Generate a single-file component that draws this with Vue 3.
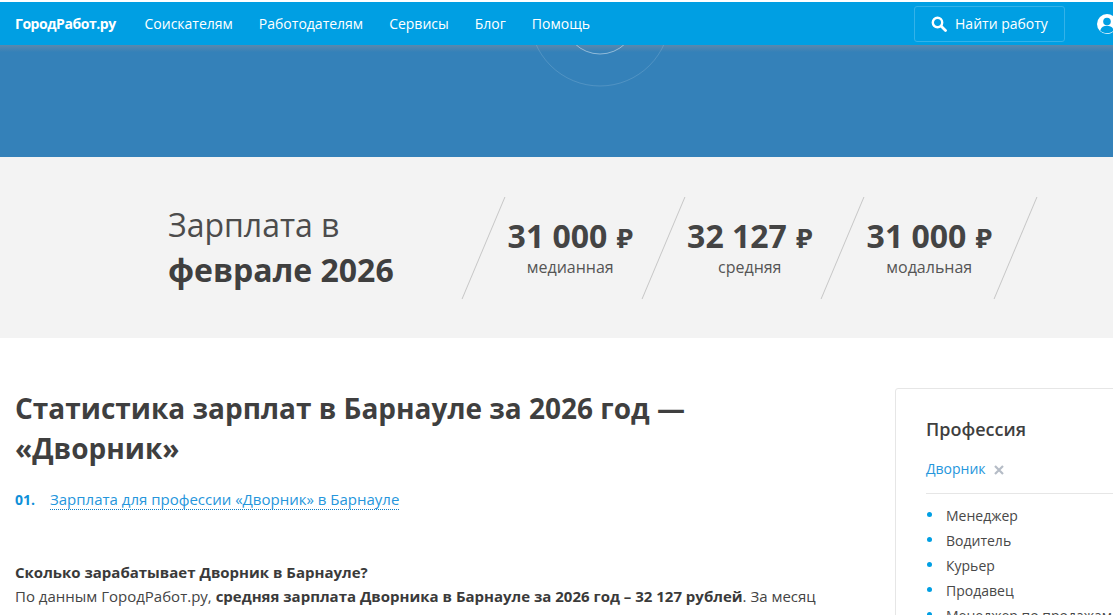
<script setup>
const nav = ['Соискателям', 'Работодателям', 'Сервисы', 'Блог', 'Помощь']
const stats = [
  { value: '31 000', label: 'медианная' },
  { value: '32 127', label: 'средняя' },
  { value: '31 000', label: 'модальная' }
]
const professions = ['Менеджер', 'Водитель', 'Курьер', 'Продавец', 'Менеджер по продажам']
</script>

<template>
  <div class="page">
    <header class="topbar">
      <a class="logo">ГородРабот.ру</a>
      <nav class="nav">
        <a v-for="item in nav" :key="item">{{ item }}</a>
      </nav>
      <button class="find">
        <svg width="16" height="16" viewBox="0 0 16 16" fill="none" stroke="#fff">
          <circle cx="6.500" cy="6.500" r="4.700" stroke-width="2.400" />
          <path d="M10 10l4.500 4.500" stroke-width="2.800" stroke-linecap="round" />
        </svg>
        <span>Найти работу</span>
      </button>
      <svg class="user" width="20" height="20" viewBox="0 0 20 20">
        <circle cx="10" cy="10" r="10" fill="#fff" />
        <circle cx="10" cy="7.500" r="3.800" fill="#009fe3" />
        <path d="M3.200 16.500c1-3.500 3.500-4.800 6.800-4.800s5.800 1.300 6.800 4.800C15 18.300 12.700 19.200 10 19.200S5 18.300 3.200 16.500z" fill="#009fe3" />
      </svg>
    </header>

    <section class="hero">
      <svg class="rings" width="160" height="60" viewBox="0 0 160 60" fill="none">
        <circle cx="80" cy="-29" r="70" stroke="#fff" stroke-opacity=".14" />
        <circle cx="80" cy="-27" r="36" stroke="#fff" stroke-opacity=".45" />
      </svg>
    </section>

    <section class="stats">
      <h2 class="stats-title">Зарплата в<br /><b>феврале 2026</b></h2>
      <div class="stats-list">
        <div v-for="(s, i) in stats" :key="i" class="stat">
          <div class="stat-value">{{ s.value }} <span class="rub">₽</span></div>
          <div class="stat-label">{{ s.label }}</div>
        </div>
      </div>
    </section>

    <div class="content">
      <main class="main">
        <h1>Статистика зарплат в Барнауле за 2026 год — «Дворник»</h1>
        <div class="toc">
          <span class="num">01.</span>
          <a>Зарплата для профессии «Дворник» в Барнауле</a>
        </div>
        <p class="text">
          <b>Сколько зарабатывает Дворник в Барнауле?</b><br />
          По данным ГородРабот.ру, <b>средняя зарплата Дворника в Барнауле за 2026 год – 32 127 рублей</b>. За месяц
          прибавка к зарплате составила 4,7% – с 30 690 до 32 127 рублей.
        </p>
      </main>
      <aside class="side">
        <h3>Профессия</h3>
        <div class="chosen">
          <a>Дворник</a>
          <svg class="x" width="10" height="10" viewBox="0 0 10 10" stroke="#b5bcc6" stroke-width="2.200">
            <path d="M1 1l8 8M9 1L1 9" />
          </svg>
        </div>
        <ul>
          <li v-for="p in professions" :key="p">{{ p }}</li>
        </ul>
      </aside>
    </div>
  </div>
</template>

<style>
html, body { margin: 0; height: 615px; overflow: hidden; background: #fff; }
</style>

<style scoped>
.page {
  width: 1113px;
  height: 615px;
  overflow: hidden;
  font-family: "Open Sans", "Noto Sans", sans-serif;
  color: #3f3f3f;
}
.topbar {
  margin-top: 2px;
  height: 43px;
  background: #009fe3;
  display: flex;
  align-items: center;
  padding-left: 15px;
  color: #fff;
  position: relative;
  z-index: 1;
  white-space: nowrap;
}
.logo { font-size: 14px; letter-spacing: -0.450px; font-weight: 700; width: 129.500px; flex: none; }
.nav { display: flex; gap: 26px; font-size: 14px; }
.find {
  margin-left: 324px;
  width: 151px;
  height: 36px;
  box-sizing: border-box;
  flex: none;
  border: 1px solid #33b2e9;
  border-radius: 3px;
  background: none;
  color: #fff;
  font: 14px "Open Sans", sans-serif;
  display: flex;
  align-items: center;
  justify-content: center;
  gap: 8px;
  padding: 0;
}
.user { margin-left: 32px; flex: none; }
.hero {
  height: 112px;
  position: relative;
  overflow: hidden;
  background: linear-gradient(#5a88ad 0, #3481b9 7px);
}
.rings { position: absolute; left: 520px; top: 0; }
.stats {
  height: 181px;
  background: #f3f3f3;
  display: flex;
  align-items: center;
  padding-left: 168px;
}
.stats-title {
  margin: 0;
  width: 315px;
  flex: none;
  font-size: 32px;
  line-height: 45px;
  font-weight: 400;
  color: #4c4c4c;
  position: relative;
  top: -1px;
}
.stats-title b { font-weight: 700; color: #3f3f3f; }
.stats-list { display: flex; }
.stat {
  width: 179.500px;
  height: 102px;
  flex: none;
  position: relative;
  display: flex;
  flex-direction: column;
  align-items: center;
  justify-content: center;
  padding-right: 5px;
  padding-bottom: 3px;
  box-sizing: border-box;
}
.stat::before,
.stat:last-child::after {
  content: "";
  position: absolute;
  top: 0;
  left: 0;
  height: 100%;
  border-left: 1px solid #c6c6c6;
  transform: skewX(-22.800deg);
}
.stat:last-child::after { left: auto; right: 5.500px; }
.stat-value { font-size: 32px; font-weight: 700; line-height: 40px; white-space: nowrap; color: #444; }
.rub { font-size: 27px; margin-left: 1px; }
.stat-label { font-size: 16px; line-height: 19px; color: #555; }
.content {
  display: flex;
  padding: 50px 0 0 15px;
}
.main { width: 830px; flex: none; margin-right: 50px; }
h1 {
  margin: 0;
  font-size: 28px;
  line-height: 40px;
  font-weight: 700;
  color: #3f3f3f;
}
.toc { margin-top: 22px; display: flex; font-size: 15px; line-height: 20px; }
.num { width: 35px; font-weight: 700; color: #0f8fd8; font-size: 14px; }
.toc a {
  color: #2596dc;
  border-bottom: 1px dotted #0f7cc0;
  line-height: 19px;
}
.text { margin: 50px 0 0; font-size: 15px; line-height: 24px; color: #444; }
.text b { color: #3a3a3a; }
.side {
  width: 300px;
  height: 400px;
  flex: none;
  box-sizing: border-box;
  border: 1px solid #e6e6e6;
  border-radius: 3px;
  padding: 28px 30px 30px;
  white-space: nowrap;
}
h3 { margin: 0; font-size: 18px; font-weight: 600; line-height: 24px; color: #3f3f3f; }
.chosen {
  margin-top: 18px;
  padding-bottom: 14px;
  border-bottom: 1px solid #e6e6e6;
  font-size: 14px;
  line-height: 20px;
  color: #2596dc;
  display: flex;
  align-items: center;
}
.x { margin-left: 8px; margin-top: 2px; }
ul { list-style: none; margin: 9px 0 0; padding: 0; }
li { font-size: 14px; line-height: 25px; padding-left: 20px; position: relative; color: #484848; }
li::before {
  content: "";
  position: absolute;
  left: 1px;
  top: 9px;
  width: 5px;
  height: 5px;
  border-radius: 50%;
  background: #009fe3;
}
</style>
